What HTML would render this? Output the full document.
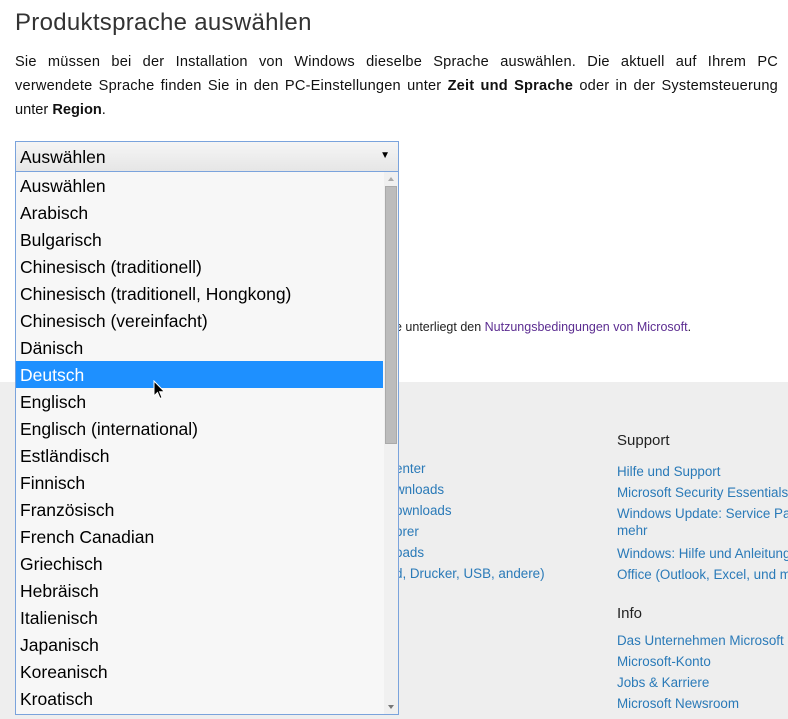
<!DOCTYPE html>
<html><head><meta charset="utf-8"><style>
*{margin:0;padding:0;box-sizing:border-box}
body{width:788px;height:719px;overflow:hidden;position:relative;background:#fff;font-family:"Liberation Sans",sans-serif;color:#000}
h1{position:absolute;left:15px;top:9px;font-size:24px;font-weight:normal;color:#333;letter-spacing:0.3px}
.intro{position:absolute;left:15px;top:50px;width:763px;font-size:14.6px;line-height:24px;color:#111;white-space:nowrap}
.intro .l{display:block;text-align:justify;text-align-last:justify;letter-spacing:0.2px}
.footer{position:absolute;left:0;top:382px;width:788px;height:337px;background:#eee}
.terms{position:absolute;left:395px;top:320px;font-size:12.5px;color:#222}
.terms a{color:#5c2d91;text-decoration:none}
.col{position:absolute;font-size:13.4px;line-height:21px}
.col a{display:block;color:#2a7ab8;text-decoration:none;white-space:nowrap}
.col h3{font-size:15px;font-weight:normal;color:#222;margin-bottom:10px}
.sel{position:absolute;left:15px;top:141px;width:384px;height:31px;border:1px solid #7aa3dc;background:linear-gradient(#f5f5f5,#e6e6e6);font-size:17.5px;padding:5px 0 0 4px}
.sel .arr{position:absolute;right:8px;top:8px;font-size:10px}
.list{position:absolute;left:15px;top:171px;width:384px;height:544px;border:1px solid #7aa3dc;background:#f7f7f7;overflow:hidden}
.list .it{height:27px;font-size:17.5px;padding:4px 0 0 4px;color:#000;width:367px}
.list .it.on{background:#1e90ff;color:#fff}
.sb{position:absolute;left:368px;top:0;width:15px;height:542px;background:#f0f0f0}
.thumb{position:absolute;left:1px;top:14px;width:12px;height:258px;background:#bcbcbc;border:1px solid #aaa}
.up,.dn{position:absolute;left:4px;width:0;height:0;border-left:3px solid transparent;border-right:3px solid transparent}
.up{top:5px;border-bottom:4px solid #aaa}
.dn{bottom:5px;border-top:4px solid #777}
</style></head><body>
<h1>Produktsprache auswählen</h1>
<div class="intro"><span class="l">Sie müssen bei der Installation von Windows dieselbe Sprache auswählen. Die aktuell auf Ihrem PC</span><span class="l">verwendete Sprache finden Sie in den PC-Einstellungen unter <b>Zeit und Sprache</b> oder in der Systemsteuerung</span><span>unter <b>Region</b>.</span></div>
<div class="terms">e unterliegt den <a>Nutzungsbedingungen von Microsoft</a>.</div>
<div class="footer"></div>
<div class="col" style="left:395px;top:458px">
<a>enter</a><a>wnloads</a><a>ownloads</a><a>orer</a><a>oads</a><a>d, Drucker, USB, andere)</a>
</div>
<div class="col" style="left:617px;top:430px">
<h3>Support</h3>
<a>Hilfe und Support</a><a>Microsoft Security Essentials</a><a>Windows Update: Service Pack</a><a style="margin-top:-4px">mehr</a><a style="margin-top:2px">Windows: Hilfe und Anleitungen</a><a>Office (Outlook, Excel, und mehr)</a>
<h3 style="margin-top:18px;margin-bottom:6px">Info</h3>
<a>Das Unternehmen Microsoft</a><a>Microsoft-Konto</a><a>Jobs &amp; Karriere</a><a>Microsoft Newsroom</a>
</div>
<div class="sel">Auswählen<span class="arr">▼</span></div>
<div class="list">
<div class="it">Auswählen</div><div class="it">Arabisch</div><div class="it">Bulgarisch</div><div class="it">Chinesisch (traditionell)</div><div class="it">Chinesisch (traditionell, Hongkong)</div><div class="it">Chinesisch (vereinfacht)</div><div class="it">Dänisch</div><div class="it on">Deutsch</div><div class="it">Englisch</div><div class="it">Englisch (international)</div><div class="it">Estländisch</div><div class="it">Finnisch</div><div class="it">Französisch</div><div class="it">French Canadian</div><div class="it">Griechisch</div><div class="it">Hebräisch</div><div class="it">Italienisch</div><div class="it">Japanisch</div><div class="it">Koreanisch</div><div class="it">Kroatisch</div>
<div class="sb"><span class="up"></span><div class="thumb"></div><span class="dn"></span></div>
</div>
<svg style="position:absolute;left:153px;top:380px" width="14" height="22" viewBox="0 0 14 22"><path d="M1 1 L1 16 L4.5 12.5 L7 18.5 L9 17.6 L6.6 11.8 L11.5 11.8 Z" fill="#000" stroke="#fff" stroke-width="1"/></svg>
</body></html>
